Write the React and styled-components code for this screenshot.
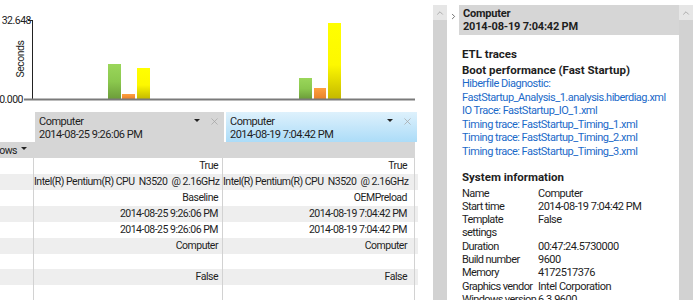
import React from 'react';
import styled, { createGlobalStyle } from 'styled-components';
import { X, ChevronUp, ChevronRight } from 'lucide-react';

const Global = createGlobalStyle`
    body {
        margin: 0;
        font-family: Roboto, "Liberation Sans", sans-serif;
        font-size: 10.5px;
        letter-spacing: -0.5px;
        color: #1e1e1e;
        background: #fff;
    }
`

const Page = styled.div`
    display: flex;
    width: 693px;
    height: 300px;
    overflow: hidden;
`

const LeftPane = styled.div`
    width: 418px;
    flex-shrink: 0;
    display: flex;
    flex-direction: column;
`

const ChartBox = styled.div`
    height: 112px;
    flex-shrink: 0;
`

const HeadRow = styled.div`
    display: grid;
    grid-template-columns: 33px 189px 191px;
    column-gap: 2px;
    height: 32px;
`

const Blank = styled.div``

const ColHead = styled.div`
    display: flex;
    align-items: flex-start;
    padding: 3px 4px 0 4px;
    line-height: 13px;
    font-size: 11px;
    background: ${p => p.$active
        ? 'linear-gradient(#def1fc, #acdcf8)'
        : '#d6d6d6'};
`

const HeadText = styled.div`
    flex: 1;
`

const HeadTools = styled.div`
    display: flex;
    align-items: center;
    gap: 9px;
    padding-top: 1px;
    color: #a0a0a0;
`

const Caret = styled.span`
    display: inline-block;
    width: 0;
    height: 0;
    border-left: 3px solid transparent;
    border-right: 3px solid transparent;
    border-top: 3px solid #222;
    margin-bottom: 3px;
`

const Band = styled.div`
    display: flex;
    height: 16px;
    width: 415px;
    background: #d6d6d6;
    align-items: center;
`

const BandLabel = styled.div`
    width: 33px;
    overflow: hidden;
    display: flex;
    justify-content: flex-end;
    white-space: nowrap;
    align-items: center;
    gap: 4px;
    padding-right: 6px;
    box-sizing: border-box;
    flex-shrink: 0;
`

const Row = styled.div`
    display: grid;
    grid-template-columns: 33px 189px 193px;
    height: 16px;
    line-height: 16px;
    background: ${p => p.$alt ? '#eeeeee' : '#fff'};
`

const Cell = styled.div`
    border-left: 1px solid #d2d2d2;
    text-align: right;
    padding-right: ${p => p.$last ? '7px' : '4px'};
    white-space: pre;
    overflow: hidden;
    ${p => p.$last && 'border-right: 1px solid #d2d2d2;'}
`

const RightPane = styled.div`
    flex: 1;
    display: flex;
    margin-left: 15px;
`

const Strip = styled.div`
    width: 14px;
    flex-shrink: 0;
    margin-top: 5px;
    background: #d2d2d2;
    display: flex;
    flex-direction: column;
`

const StripTop = styled.div`
    height: 15px;
    background: #e6e6e6;
    display: flex;
    justify-content: center;
    align-items: center;
    color: #8a8a8a;
`

const Gutter = styled.div`
    width: 12px;
    flex-shrink: 0;
    padding-top: 12px;
    display: flex;
    justify-content: center;
    color: #444;
`

const Details = styled.div`
    flex: 1;
    margin-top: 5px;
    line-height: 13.5px;
    font-size: 11px;
`

const DetailHead = styled.div`
    height: 30px;
    background: #d6d6d6;
    padding: 3px 4px 0;
    box-sizing: border-box;
    font-weight: bold;
    font-size: 11px;
    letter-spacing: -0.2px;
    line-height: 12.5px;
`

const Body = styled.div`
    padding: 13px 3px 0;
`

const Title = styled.div`
    font-weight: bold;
    font-size: 11.5px;
    letter-spacing: 0;
    margin-bottom: ${p => p.$gap || 0}px;
`

const Link = styled.div`
    color: #1b6ac9;
`

const Section = styled.div`
    margin-top: ${p => p.$top || 0}px;
`

const InfoGrid = styled.div`
    display: grid;
    grid-template-columns: 74px 1fr;
    column-gap: 2px;
    line-height: 13.3px;
`

const InfoKey = styled.div`
    white-space: pre;
    letter-spacing: -0.6px;
`

const chartBars = [
    { x: 108, w: 13, y: 64, fill: 'url(#g)' },
    { x: 122, w: 13, y: 94, fill: 'url(#o)' },
    { x: 137, w: 13, y: 68, fill: 'url(#y)' },
    { x: 299, w: 13, y: 78, fill: 'url(#g)' },
    { x: 314, w: 12, y: 88, fill: 'url(#o)' },
    { x: 328, w: 13, y: 23, fill: 'url(#y)' },
]

const Chart = () => (
    <svg width="418" height="108" style={{ display: 'block' }}>
        <defs>
            <linearGradient id="g" x1="0" y1="0" x2="0" y2="1">
                <stop offset="0" stopColor="#9ad65a" />
                <stop offset="0.5" stopColor="#8bc84e" />
                <stop offset="1" stopColor="#6c9c3a" />
            </linearGradient>
            <linearGradient id="o" x1="0" y1="0" x2="0" y2="1">
                <stop offset="0" stopColor="#ffa040" />
                <stop offset="1" stopColor="#e8822a" />
            </linearGradient>
            <linearGradient id="y" x1="0" y1="0" x2="0" y2="1">
                <stop offset="0" stopColor="#ffff00" />
                <stop offset="0.55" stopColor="#fdf800" />
                <stop offset="1" stopColor="#c4b800" />
            </linearGradient>
        </defs>
        <g fontFamily="Roboto, sans-serif" fontSize="10.5" fill="#222" letterSpacing="-0.5">
            <text x="31" y="24" textAnchor="end">32.648</text>
            <text x="23" y="103" textAnchor="end">0.000</text>
            <text transform="translate(23.5 59) rotate(-90)" textAnchor="middle">Seconds</text>
        </g>
        <line x1="28" y1="20.5" x2="33" y2="20.5" stroke="#222" />
        <line x1="32.5" y1="20" x2="32.5" y2="99" stroke="#222" />
        {chartBars.map((b, i) => (
            <rect key={i} x={b.x} y={b.y} width={b.w} height={99 - b.y} fill={b.fill} />
        ))}
        <line x1="24" y1="99.5" x2="415" y2="99.5" stroke="#7a7a7a" strokeWidth="2" />
    </svg>
)

const rows = [
    ['True', 'True'],
    ['Intel(R) Pentium(R) CPU  N3520  @ 2.16GHz', 'Intel(R) Pentium(R) CPU  N3520  @ 2.16GHz'],
    ['Baseline', 'OEMPreload'],
    ['2014-08-25 9:26:06 PM', '2014-08-19 7:04:42 PM'],
    ['2014-08-25 9:26:06 PM', '2014-08-19 7:04:42 PM'],
    ['Computer', 'Computer'],
    ['', ''],
    ['False', 'False'],
    ['', ''],
]

const links = [
    'Hiberfile Diagnostic:',
    'FastStartup_Analysis_1.analysis.hiberdiag.xml',
    'IO Trace: FastStartup_IO_1.xml',
    'Timing trace: FastStartup_Timing_1.xml',
    'Timing trace: FastStartup_Timing_2.xml',
    'Timing trace: FastStartup_Timing_3.xml',
]

const info = [
    ['Name', 'Computer'],
    ['Start time', '2014-08-19 7:04:42 PM'],
    ['Template\nsettings', 'False'],
    ['Duration', '00:47:24.5730000'],
    ['Build number', '9600'],
    ['Memory', '4172517376'],
    ['Graphics vendor', 'Intel Corporation'],
    ['Windows version', '6.3.9600'],
]

const App = () => {
    return (
        <Page>
            <Global />
            <LeftPane>
                <ChartBox><Chart /></ChartBox>
                <HeadRow>
                    <Blank />
                    <ColHead>
                        <HeadText>Computer<br />2014-08-25 9:26:06 PM</HeadText>
                        <HeadTools><Caret /><X size={11} strokeWidth={1.5} /></HeadTools>
                    </ColHead>
                    <ColHead $active>
                        <HeadText>Computer<br />2014-08-19 7:04:42 PM</HeadText>
                        <HeadTools><Caret /><X size={11} strokeWidth={1.5} /></HeadTools>
                    </ColHead>
                </HeadRow>
                <Band>
                    <BandLabel>All rows <Caret /></BandLabel>
                </Band>
                {rows.map((r, i) => (
                    <Row key={i} $alt={i % 2 === 1}>
                        <Blank />
                        <Cell>{r[0]}</Cell>
                        <Cell $last>{r[1]}</Cell>
                    </Row>
                ))}
            </LeftPane>
            <RightPane>
                <Strip>
                    <StripTop><ChevronUp size={10} strokeWidth={1.5} /></StripTop>
                </Strip>
                <Gutter><ChevronRight size={9} strokeWidth={2} /></Gutter>
                <Details>
                    <DetailHead>Computer<br />2014-08-19 7:04:42 PM</DetailHead>
                    <Body>
                        <Title $gap={2}>ETL traces</Title>
                        <Title>Boot performance (Fast Startup)</Title>
                        {links.map(l => <Link key={l}>{l}</Link>)}
                        <Section $top={13}>
                            <Title $gap={2}>System information</Title>
                            <InfoGrid>
                                {info.map(([k, v]) => (
                                    <React.Fragment key={k}>
                                        <InfoKey>{k}</InfoKey>
                                        <div>{v}</div>
                                    </React.Fragment>
                                ))}
                            </InfoGrid>
                        </Section>
                    </Body>
                </Details>
                <Strip>
                    <StripTop><ChevronUp size={10} strokeWidth={1.5} /></StripTop>
                </Strip>
            </RightPane>
        </Page>
    )
}

export default App
